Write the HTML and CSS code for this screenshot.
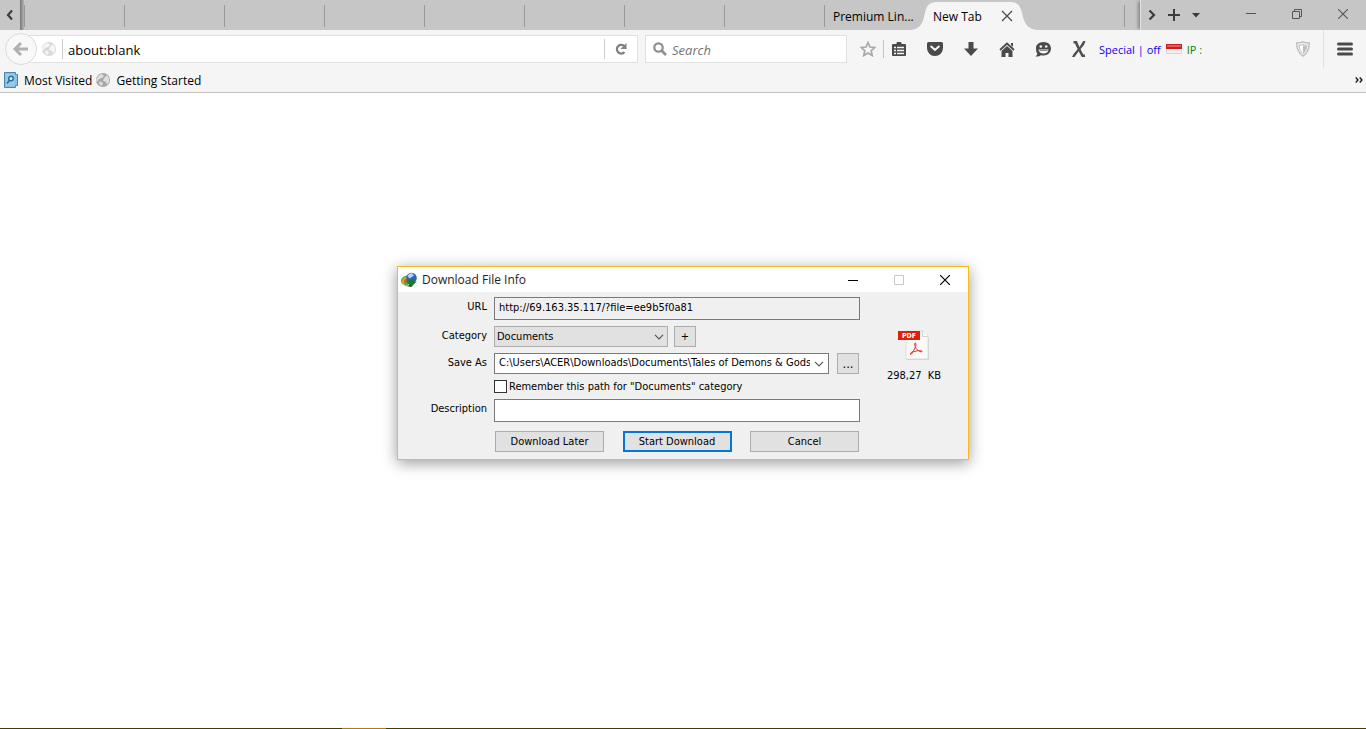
FILE: index.html
```html
<!DOCTYPE html>
<html lang="en">
  <head>
    <meta charset="UTF-8" />
    <meta name="viewport" content="width=device-width, initial-scale=1.0" />
    <title>New Tab</title>
    <link rel="stylesheet" href="styles.css">
  </head>
  <body>
    <header class="browser">
      <div class="tabstrip">
        <button class="scroll-btn scroll-left" aria-label="Scroll tabs left">
          <svg width="8" height="12" viewBox="0 0 8 12"><path d="M6 1.500L2 6l4 4.500" fill="none" stroke="#3c3c3c" stroke-width="2.200" /></svg>
        </button>
        <div class="tabs">
          <div class="tab"></div>
          <div class="tab"></div>
          <div class="tab"></div>
          <div class="tab"></div>
          <div class="tab"></div>
          <div class="tab"></div>
          <div class="tab"></div>
          <div class="tab"></div>
          <div class="tab"><span>Premium Lin...</span></div>
          <div class="tab active">
            <svg class="tab-shape" width="126" height="30" viewBox="0 0 126 30"><path d="M0 30C8 29 11 25 13 17C15 7 17 2 26 2H99C108 2 110 7 112 17C114 25 118 29 126 30Z" fill="#f5f5f5" /></svg>
            <span>New Tab</span>
            <button class="tab-close" aria-label="Close tab">
              <svg width="12" height="12" viewBox="0 0 12 12"><path d="M1 1l10 10M11 1L1 11" stroke="#4c4c4c" stroke-width="1.300" /></svg>
            </button>
          </div>
          <div class="tab plain"></div>
          <div class="tab last"></div>
        </div>
        <div class="tab-tools">
          <button aria-label="Scroll tabs right">
            <svg width="8" height="12" viewBox="0 0 8 12"><path d="M1.500 1.500L6 6l-4.500 4.500" fill="none" stroke="#3c3c3c" stroke-width="2.200" /></svg>
          </button>
          <button aria-label="Open a new tab">
            <svg width="12" height="12" viewBox="0 0 12 12"><path d="M6 0v12M0 6h12" stroke="#3c3c3c" stroke-width="2" /></svg>
          </button>
          <button aria-label="List all tabs">
            <svg width="8" height="5" viewBox="0 0 8 5"><path d="M0 0h8L4 4.500z" fill="#3c3c3c" /></svg>
          </button>
        </div>
        <div class="window-buttons">
          <button aria-label="Minimize"><svg width="10" height="10" viewBox="0 0 10 10"><path d="M0 4.500h10" stroke="#555" /></svg></button>
          <button aria-label="Restore"><svg width="10" height="10" viewBox="0 0 10 10"><path d="M.5 2.500h7v7h-7zM2.500 2.500v-2h7v7h-2" fill="none" stroke="#555" /></svg></button>
          <button aria-label="Close"><svg width="10" height="10" viewBox="0 0 10 10"><path d="M0 0l10 10M10 0L0 10" stroke="#555" stroke-width="1.100" /></svg></button>
        </div>
      </div>

      <div class="navbar">
        <button class="back" aria-label="Back">
          <svg width="16" height="14" viewBox="0 0 16 14"><path d="M8 1L2 7l6 6M2.500 7H15" fill="none" stroke="#b0b0b0" stroke-width="3" /></svg>
        </button>
        <div class="urlbar">
          <svg class="globe pale" width="14" height="14" viewBox="0 0 14 14"><circle cx="7" cy="7" r="7" fill="#c9c9c9" /><path d="M3 2l3-1 2 2-2 2-3 1-2 3-1-2zM8 5l3-3 2 3v4l-2 3-1-3-3-1zM4 8l3 2-1 3-3-2z" fill="#f3f3f3" /></svg>
          <input class="url" type="text" value="about:blank" aria-label="Address" />
          <button class="reload" aria-label="Reload">
            <svg width="12" height="12" viewBox="0 0 12 12"><path d="M9.500 3.500A4.300 4.300 0 1 0 9.500 9" fill="none" stroke="#808080" stroke-width="2.200" /><path d="M11.500 0v6h-6z" fill="#808080" /></svg>
          </button>
        </div>
        <div class="searchbar">
          <svg width="14" height="14" viewBox="0 0 14 14"><circle cx="5.500" cy="5.500" r="4.200" fill="none" stroke="#8e8e8e" stroke-width="2.200" /><path d="M8.500 8.500l4.500 4.500" stroke="#8e8e8e" stroke-width="2.600" /></svg>
          <input type="text" placeholder="Search" aria-label="Search" />
        </div>
        <div class="toolbar">
          <button class="star" aria-label="Bookmark this page">
            <svg width="16" height="16" viewBox="0 0 16 16"><path d="M8 1.500l2 4.500 4.700.5-3.500 3.200 1 4.800L8 12l-4.200 2.500 1-4.800L1.300 6.500 6 6z" fill="none" stroke="#a8a8a8" stroke-width="1.700" /></svg>
          </button>
          <button class="lined" aria-label="Show your bookmarks">
            <svg width="14" height="14" viewBox="0 0 14 14"><path d="M0 3q0-1 1-1h3.500V1.200Q4.500 0 5.500 0h3q1 0 1 1.200V2H13q1 0 1 1v10q0 1-1 1H1q-1 0-1-1z" fill="#4a4a4a" /><path d="M2 5.500h2M5 5.500h7M2 8.500h2M5 8.500h7M2 11.500h2M5 11.500h7" stroke="#f5f5f5" stroke-width="1.400" /></svg>
          </button>
          <button aria-label="Save to Pocket">
            <svg width="16" height="14" viewBox="0 0 16 14"><path d="M1.500 0h13Q16 0 16 1.500V6q0 3.500-2.300 5.700T8 14 2.300 11.700 0 6V1.500Q0 0 1.500 0z" fill="#4a4a4a" /><path d="M4.200 4.500L8 8l3.800-3.500" fill="none" stroke="#f5f5f5" stroke-width="2" stroke-linecap="round" /></svg>
          </button>
          <button aria-label="Downloads">
            <svg width="14" height="14" viewBox="0 0 14 14"><path d="M4.500 0h5v6.500H14L7 14 0 6.500h4.500z" fill="#4a4a4a" /></svg>
          </button>
          <button aria-label="Home">
            <svg width="16" height="15" viewBox="0 0 16 15"><path d="M1 8l7-6.500L15 8" fill="none" stroke="#4a4a4a" stroke-width="1.800" /><path d="M12 1h2v4l-2-2zM8 4l5.500 5v6H9.500v-4h-3v4h-4V9z" fill="#4a4a4a" /></svg>
          </button>
          <button aria-label="Start a conversation">
            <svg width="16" height="15" viewBox="0 0 16 15"><path d="M8.500 0C13 0 16 2.800 16 6.500S13 13.500 8.500 13.500q-1.500 0-2.500-.3Q4 15 .5 14.500 2.500 13 2.200 11.500 1 10 1 6.500 1 0 8.500 0z" fill="#4a4a4a" /><circle cx="5.800" cy="4.500" r="1.300" fill="#f5f5f5" /><circle cx="11.200" cy="4.500" r="1.300" fill="#f5f5f5" /><path d="M3.500 7.500h10q-.5 4-5 4t-5-4z" fill="#f5f5f5" /><path d="M4.500 8.500h8" stroke="#4a4a4a" stroke-width=".6" /></svg>
          </button>
          <button aria-label="Proxy switcher">
            <svg width="14" height="16" viewBox="0 0 14 16"><path d="M1.500 1.300h2.500Q5 4 7 8t3.500 6.700h2.500" fill="none" stroke="#505050" stroke-width="2.600" /><path d="M13.500 0h-2.300L7.500 6 1.500 13 0 16h2.500l4.800-6.500L12 4z" fill="#505050" /></svg>
          </button>
          <div class="proxy">
            <a class="special" href="#">Special | off</a>
            <svg width="16" height="10" viewBox="0 0 16 10"><path d="M0 0h16v10H0z" fill="#d6d6d6" /><path d="M0 0h16v5H0z" fill="#cf1c1c" /><path d="M1 1h14v2H1z" fill="#e35a5a" /><path d="M1 5h14v4H1z" fill="#f0f0f0" /></svg>
            <span class="ip">IP :</span>
          </div>
          <button class="shield" aria-label="Shield">
            <svg width="14" height="16" viewBox="0 0 14 16"><path d="M7 .8Q10 2 13.300 1.800 13.500 11 7 15.200.5 11 .7 1.800 4 2 7 .8z" fill="#eee" stroke="#bdbdbd" stroke-width="1.300" /><path d="M7 3.500q2 .9 4 .9Q10.800 10 7 12.700 3.200 10 3 4.400q2 0 4-.9z" fill="#fff" stroke="#c4c4c4" /><path d="M7 4v8.300q3.300-2.300 3.500-7.400Q9 5 7 4z" fill="#bdbdbd" /></svg>
          </button>
          <button class="menu" aria-label="Open menu">
            <svg width="16" height="14" viewBox="0 0 16 14"><path d="M1.500 2h13M1.500 7h13M1.500 12h13" stroke="#4a4a4a" stroke-width="3" stroke-linecap="round" /></svg>
          </button>
        </div>
      </div>

      <nav class="bookmarks">
        <a href="#">
          <svg width="14" height="16" viewBox="0 0 14 16"><path d="M.5.500h11v2h2v11h-2v2H.5z" fill="#8fc0e4" stroke="#4a86b4" /><path d="M2 2h8.500v11.500H2z" fill="#9ccbea" /><circle cx="7" cy="6.500" r="2.300" fill="#d8edfa" stroke="#2f6f9f" stroke-width="1.500" /><path d="M5.500 8.300L3 11.500" stroke="#2f6f9f" stroke-width="1.800" /></svg>
          Most Visited
        </a>
        <a href="#">
          <svg width="14" height="14" viewBox="0 0 14 14"><circle cx="7" cy="7" r="7" fill="#a6a6a6" /><path d="M3 2l3-1 2 2-2 2-3 1-2 3-1-2zM8 5l3-3 2 3v4l-2 3-1-3-3-1zM4 8l3 2-1 3-3-2z" fill="#dedede" /></svg>
          Getting Started
        </a>
        <button class="more" aria-label="More bookmarks">
          <svg width="8" height="6" viewBox="0 0 8 6"><path d="M.7.500L3 3 .7 5.500M4.700.500L7 3 4.700 5.500" fill="none" stroke="#111" stroke-width="1.300" /></svg>
        </button>
      </nav>
    </header>

    <main class="page">
      <section class="dialog" role="dialog" aria-labelledby="dialog-title">
        <div class="titlebar">
          <svg class="idm" width="16" height="16" viewBox="0 0 16 16">
            <path d="M0 9Q0 4.500 6 3.500L8 12q-1 1.500-4 1Q0 12 0 9z" fill="#58a832" />
            <path d="M1 9.500Q1.500 5.500 6 5l1 2.500-3.500 2L3.500 12Q1 11.500 1 9.500z" fill="#e2b126" />
            <path d="M2.500 9.500Q3 7 6 6.500V9L4 11z" fill="#d9552b" />
            <circle cx="10.500" cy="6" r="5.300" fill="#2f66b4" />
            <path d="M6.500 4Q8 .8 11 1.200l2 2.300-4.500 3z" fill="#b5daf2" />
            <path d="M5 9.500h2.500L8 7.500h5l.5 2h2L10.500 15z" fill="#1c7a2a" />
            <path d="M2 12.500q4 2.500 7 0l1.500 2.500-2.500-.5q-4 0-6-2z" fill="#173f1d" />
          </svg>
          <h1 id="dialog-title">Download File Info</h1>
          <button aria-label="Minimize"><svg width="10" height="10" viewBox="0 0 10 10"><path d="M0 5.500h10" stroke="#000" /></svg></button>
          <button aria-label="Maximize" disabled><svg width="10" height="10" viewBox="0 0 10 10"><path d="M.5.500h9v9h-9z" fill="none" stroke="#c8c8c8" /></svg></button>
          <button aria-label="Close"><svg width="10" height="10" viewBox="0 0 10 10"><path d="M0 0l10 10M10 0L0 10" stroke="#000" stroke-width="1.200" /></svg></button>
        </div>

        <div class="dialog-body">
          <form class="form">
            <label for="url">URL</label>
            <input id="url" class="field readonly" type="text" value="http://69.163.35.117/?file=ee9b5f0a81" readonly />

            <label for="category">Category</label>
            <div class="row">
              <div class="select">
                <select id="category">
                  <option>Documents</option>
                </select>
                <svg width="10" height="6" viewBox="0 0 10 6"><path d="M1 .8L5 4.800 9 .8" fill="none" stroke="#555" stroke-width="1.200" /></svg>
              </div>
              <button type="button" class="btn small" aria-label="Add category">+</button>
            </div>

            <label for="path">Save As</label>
            <div class="row wide">
              <div class="combo">
                <input id="path" type="text" value="C:\Users\ACER\Downloads\Documents\Tales of Demons &amp; Gods" />
                <button type="button" aria-label="Recent paths"><svg width="10" height="6" viewBox="0 0 10 6"><path d="M1 .8L5 4.800 9 .8" fill="none" stroke="#555" stroke-width="1.200" /></svg></button>
              </div>
              <button type="button" class="btn small dots" aria-label="Browse">...</button>
            </div>

            <div class="check">
              <input id="remember" type="checkbox" />
              <label for="remember">Remember this path for "Documents" category</label>
            </div>

            <label for="description">Description</label>
            <input id="description" class="field" type="text" />

            <div class="actions">
              <button type="button" class="btn">Download Later</button>
              <button type="button" class="btn default">Start Download</button>
              <button type="button" class="btn">Cancel</button>
            </div>
          </form>

          <div class="file">
            <svg width="32" height="32" viewBox="0 0 32 32">
              <path d="M8 2h17l6 6v22H8z" fill="#ccc" />
              <path d="M8 1h17l5 5v23H8z" fill="#fafafa" stroke="#dedede" />
              <path d="M24.500 1v5.500H30" fill="#fff" stroke="#d4d4d4" />
              <path d="M0 1h22v9H0z" fill="#e01f06" />
              <text class="pdf-tag" x="11" y="8" text-anchor="middle">PDF</text>
              <path d="M12.500 24.500q-1-1.500 3-3.500 3-5 2.500-7.500-1-1.500-1.300.5.300 5 4.800 7.500 3.500.8 2.500-.5-2.500-1.300-9 .8-2 3.500-2.500 2.700z" fill="none" stroke="#e33a2e" />
            </svg>
            <span>298,27 &nbsp;KB</span>
          </div>
        </div>
      </section>
    </main>
    <footer class="taskbar"><span></span></footer>
  </body>
</html>
```
FILE: styles.css
```css
*
{
  box-sizing: border-box;
}
body
{
  margin: 0;
  min-height: 100vh;
  display: flex;
  flex-direction: column;
  background-color: #fff;
  color: #000;
  font-family: "Open Sans", "Noto Sans", sans-serif;
  font-size: 12px;
}
button
{
  display: flex;
  align-items: center;
  justify-content: center;
  padding: 0;
  border: none;
  background: none;
  color: inherit;
  font: inherit;
}
input, select
{
  min-width: 0;
  margin: 0;
  border: none;
  outline: none;
  color: inherit;
  font: inherit;
}
svg
{
  display: block;
  flex: none;
}
a
{
  color: inherit;
  text-decoration: none;
}

/* tab strip */
.tabstrip
{
  display: flex;
  height: 30px;
  overflow: hidden;
  background-color: #c6c6c6;
}
.scroll-left
{
  width: 24px;
  padding-right: 4px;
  background: linear-gradient(to right, transparent 20px, #777 20px, #b4b4b4 24px);
}
.tabs
{
  display: flex;
  flex: 1;
}
.tab
{
  position: relative;
  display: flex;
  align-items: center;
  flex: 80 1 0;
  min-width: 0;
  padding: 2px 11px 0 9px;
  white-space: nowrap;
}
.tab:not(.active):not(.plain)
{
  background: linear-gradient(#999, #999) 0 5px / 1px 22px no-repeat;
}
.tab.last
{
  flex-grow: 16;
  padding: 0;
}
.tab.active
{
  z-index: 1;
  justify-content: space-between;
}
.tab.active span
{
  position: relative;
}
.tab-shape
{
  position: absolute;
  left: -13px;
  top: 0;
}
.tab-close
{
  position: relative;
}
.tab-tools
{
  display: flex;
  width: 88px;
  border-left: 1px solid #e4e4e4;
  box-shadow: -3px 0 3px -1px #888;
}
.tab-tools button
{
  width: 22px;
}
.window-buttons
{
  display: flex;
}
.window-buttons button
{
  width: 46px;
  height: 28px;
}

/* navigation bar */
.navbar
{
  display: flex;
  align-items: center;
  height: 38px;
  padding-left: 5px;
  background-color: #f5f5f5;
}
.back
{
  z-index: 1;
  width: 32px;
  height: 32px;
  border: 1px solid #dcdcdc;
  border-radius: 50%;
  background-color: #f8f8f8;
}
.urlbar, .searchbar
{
  display: flex;
  align-items: center;
  height: 28px;
  border: 1px solid #e0e0e0;
  background-color: #fff;
}
.urlbar
{
  flex: 1;
  margin-left: -8px;
  padding-left: 12px;
}
.pale
{
  opacity: .7;
}
.url
{
  flex: 1;
  height: 20px;
  margin-left: 6px;
  padding: 1px 0 0 5px;
  border-left: 1px solid #ccc;
  font-size: 13px;
}
.reload
{
  width: 33px;
  height: 20px;
  border-left: 1px solid #ccc;
}
.searchbar
{
  width: 202px;
  margin-left: 7px;
  padding-left: 7px;
  gap: 5px;
}
.searchbar input
{
  flex: 1;
  padding: 1px 0 0;
  font-size: 13px;
}
.searchbar input::placeholder
{
  color: #757575;
  font-style: italic;
}
.toolbar
{
  display: flex;
  align-items: center;
  width: 519px;
  height: 38px;
  padding-left: 6px;
}
.toolbar button
{
  width: 36px;
  height: 18px;
}
.toolbar .star
{
  width: 30px;
}
.toolbar .lined
{
  width: 34px;
  padding-right: 3px;
  border-left: 1px solid #c4c4c4;
}
.proxy
{
  display: flex;
  align-items: center;
  flex: 1;
  gap: 5px;
  padding-left: 2px;
  font-size: 11px;
}
.special
{
  color: #1200ee;
}
.ip
{
  color: #0a8010;
}
.toolbar .menu
{
  width: 43px;
  height: 38px;
  border-left: 1px solid #e0e0e0;
}
.toolbar .shield
{
  width: 40px;
}

/* bookmarks */
.bookmarks
{
  display: flex;
  align-items: center;
  gap: 4px;
  height: 25px;
  padding: 0 3px 0 4px;
  border-bottom: 1px solid #c2c2c2;
  background-color: #f5f5f5;
}
.bookmarks a
{
  display: flex;
  align-items: center;
  gap: 6px;
}
.more
{
  margin-left: auto;
}

/* download dialog */
.page
{
  display: flex;
  flex: 1;
  align-items: flex-start;
  justify-content: center;
  padding-top: 173px;
}
.dialog
{
  width: 572px;
  border: 1px solid #f8b91c;
  background-color: #f0f0f0;
  box-shadow: 0 3px 14px rgba(0, 0, 0, .4);
  font-family: "DejaVu Sans Condensed", "DejaVu Sans", sans-serif;
  font-size: 11px;
}
.titlebar
{
  display: flex;
  align-items: center;
  height: 25px;
  padding-left: 3px;
  background-color: #fff;
  font-family: "Open Sans", "Noto Sans", sans-serif;
}
.titlebar h1
{
  flex: 1;
  margin: 0 0 0 5px;
  color: #222;
  font-size: 12px;
  font-weight: normal;
}
.titlebar button
{
  width: 46px;
  height: 25px;
}
.dialog-body
{
  display: flex;
  padding: 5px 0 7px;
}
.form
{
  display: grid;
  grid-template-columns: 89px 366px;
  column-gap: 7px;
  row-gap: 6px;
}
.form > label
{
  padding-top: 3px;
  line-height: 14px;
  text-align: right;
}
.field
{
  height: 23px;
  padding: 0 4px 2px;
  border: 1px solid #7a7a7a;
  background-color: #fff;
}
.readonly
{
  background-color: #f0f0f0;
}
.row
{
  display: flex;
  gap: 6px;
  height: 21px;
}
.row.wide
{
  gap: 8px;
}
.select
{
  position: relative;
  width: 174px;
}
.select select
{
  width: 100%;
  height: 21px;
  padding: 0 2px;
  border: 1px solid #adadad;
  border-radius: 0;
  appearance: none;
  background-color: #e1e1e1;
}
.select svg
{
  position: absolute;
  right: 4px;
  top: 8px;
  pointer-events: none;
}
.combo
{
  display: flex;
  width: 335px;
  border: 1px solid #7a7a7a;
  background-color: #fff;
}
.combo input
{
  flex: 1;
  padding: 0 0 2px 4px;
  background: none;
}
.combo button
{
  width: 18px;
}
.btn
{
  width: 109px;
  height: 21px;
  border: 1px solid #adadad;
  background-color: #e1e1e1;
}
.btn.small
{
  width: 22px;
}
.btn.dots
{
  font-size: 13px;
}
.btn.default
{
  border: 2px solid #0078d7;
}
.check
{
  display: flex;
  grid-column: 2;
  align-items: center;
  gap: 2px;
  height: 13px;
}
.check input
{
  width: 13px;
  height: 13px;
  border: 1px solid #333;
  appearance: none;
  background-color: #fff;
}
.actions
{
  display: flex;
  grid-column: 2;
  justify-content: space-between;
  padding: 3px 1px 0;
}
.file
{
  display: flex;
  flex: 1;
  flex-direction: column;
  align-items: center;
  gap: 7px;
  padding-top: 33px;
}
.pdf-tag
{
  fill: #fff;
  font: bold 7px "DejaVu Sans Condensed", sans-serif;
}

/* top edge of the taskbar */
.taskbar
{
  height: 1px;
  background-color: #4d3600;
}
.taskbar span
{
  display: block;
  width: 44px;
  height: 1px;
  margin-left: 342px;
  background-color: #b17c00;
}
```
